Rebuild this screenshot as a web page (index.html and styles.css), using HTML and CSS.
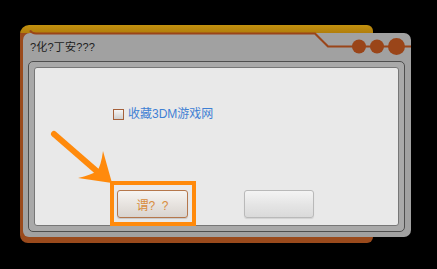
FILE: index.html
```html
<!DOCTYPE html>
<html>
<head>
<meta charset="utf-8">
<link rel="stylesheet" href="styles.css">
</head>
<body>
<div class="stage">
  <div class="back"></div>
  <div class="window">
    <div class="title">?化?丁安???</div>
    <div class="frame">
      <div class="content">
        <label class="check-row">
          <span class="checkbox"></span>
          <span class="check-label">收藏3DM游戏网</span>
        </label>
        <div class="buttons">
          <span class="btn-wrap">
            <span class="btn btn-ok">谓?&nbsp;&nbsp;?</span>
            <span class="highlight"></span>
          </span>
          <span class="btn btn-cancel"></span>
        </div>
      </div>
    </div>
  </div>
  <svg class="overlay" width="437" height="269" viewBox="0 0 437 269">
    <path d="M30,30.5 Q32,33.5 36,33.5 H315 L328,46.5 H411" fill="none" stroke="#9a4519" stroke-width="2.2"/>
    <circle cx="359" cy="46.5" r="7" fill="#9a4519"/>
    <circle cx="377" cy="46.5" r="7" fill="#9a4519"/>
    <circle cx="396.5" cy="46.5" r="8.5" fill="#9a4519"/>
    <line x1="54" y1="134" x2="100" y2="174" stroke="#ff8a0c" stroke-width="6" stroke-linecap="round"/>
    <path d="M112,183 L103,151 Q101,166 97,171 Q91,175 78,178 Z" fill="#ff8a0c"/>
  </svg>
</div>
</body>
</html>
```

FILE: styles.css
```css
html, body {
  margin: 0;
  padding: 0;
  background: #000;
}

.stage {
  position: relative;
  width: 437px;
  height: 269px;
  overflow: hidden;
  padding: 33px 0 0 23px;
  box-sizing: border-box;
  font-family: "Liberation Sans", "Noto Sans CJK SC", sans-serif;
}

.back {
  position: absolute;
  left: 20px;
  top: 25px;
  width: 353px;
  height: 218px;
  border-radius: 9px 6px 6px 8px;
  background: linear-gradient(#c2910f 0, #b17e0b 8px, #9a4a1c 8px, #9a4a1c 100%);
}

.window {
  position: relative;
  width: 388px;
  height: 204px;
  border-radius: 7px 7px 7px 6px;
  background: #a1a1a1;
  padding: 0 6px 5px 5px;
  box-sizing: border-box;
  display: flex;
  flex-direction: column;
}

.title {
  height: 28px;
  padding: 8px 0 0 2px;
  box-sizing: border-box;
  font-size: 11px;
  line-height: 13px;
  color: #1c1c1c;
  letter-spacing: 0.2px;
}

.frame {
  flex: 1;
  border: 1px solid #4e4e4e;
  border-radius: 5px;
  background: #a9a9a9;
  padding: 5px;
}

.content {
  height: 100%;
  box-sizing: border-box;
  border: 1px solid #777;
  border-radius: 3px;
  background: #e9e9e9;
  display: flex;
  flex-direction: column;
}

.check-row {
  display: flex;
  align-items: center;
  margin: 40px 0 0 78px;
  height: 12px;
}

.checkbox {
  width: 9px;
  height: 9px;
  border: 1px solid #a5603a;
  background: linear-gradient(#f6f6f6, #cfcfcf);
}

.check-label {
  margin-left: 4px;
  font-size: 12px;
  line-height: 12px;
  color: #3f80d4;
}

.buttons {
  display: flex;
  margin: 70px 0 0 82px;
}

.btn-wrap {
  position: relative;
  display: flex;
}

.btn {
  height: 28px;
  box-sizing: border-box;
  border-radius: 3px;
  display: flex;
  align-items: center;
  justify-content: center;
  font-size: 12px;
}

.btn-ok {
  width: 71px;
  border: 1px solid #b5774c;
  background: linear-gradient(#f6f4f2, #e6e2de 55%, #d9d4cf);
  color: #d88c3c;
  box-shadow: 0 1px 1px rgba(0, 0, 0, 0.15);
}

.btn-cancel {
  width: 70px;
  margin-left: 56px;
  border: 1px solid #b9b9b9;
  background: linear-gradient(#f4f4f4, #e4e4e4 55%, #dadada);
  box-shadow: 0 1px 1px rgba(0, 0, 0, 0.1);
}

.highlight {
  position: absolute;
  left: -7px;
  top: -9px;
  right: -8px;
  bottom: -8px;
  border: 4px solid #ff8a0c;
}

.overlay {
  position: absolute;
  left: 0;
  top: 0;
  pointer-events: none;
}
```
